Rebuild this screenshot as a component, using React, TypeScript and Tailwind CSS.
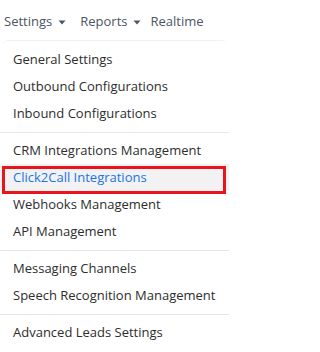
import React from "react";

const Caret = () => (
  <svg width="8" height="5" viewBox="0 0 8 5" className="ml-[6px] mt-[1px]">
    <path d="M0.5 0.5 L7.5 0.5 L4 4.5 Z" fill="#4b5563" />
  </svg>
);

const Item = ({ children }: { children: React.ReactNode }) => (
  <div className="h-[27px] flex items-center pl-[13px] text-[13px] text-[#2d2d2d] whitespace-nowrap">
    {children}
  </div>
);

const Divider = () => <div className="h-px bg-[#e6e6e6] mt-[5px] mb-[4px]" />;

export default function App() {
  return (
    <div className="w-[229px] h-[352px] bg-white overflow-hidden" style={{ fontFamily: "'Open Sans', 'Liberation Sans', sans-serif" }}>
      <div className="h-[40px] flex items-center pl-[4px] pt-[3px] text-[13px] text-[#4b5563]">
        <span className="flex items-center">Settings<Caret /></span>
        <span className="flex items-center ml-[14px]">Reports<Caret /></span>
        <span className="ml-[9px]">Realtime</span>
      </div>
      <div className="rounded-t-[6px] border-t border-[#f2f2f2] pt-[5px] mx-[2px]">
        <div className="-mx-[2px]">
          <Item>General Settings</Item>
          <Item>Outbound Configurations</Item>
          <Item>Inbound Configurations</Item>
          <Divider />
          <Item>CRM Integrations Management</Item>
          <div className="relative h-[27px] flex items-center pl-[13px] text-[13px] text-[#1a73e8] bg-[#f2f2f2] whitespace-nowrap">
            Click2Call Integrations
            <span className="absolute left-[2px] right-[3px] top-[2px] bottom-[-3px] border-[3px] border-[#e8151f]" />
          </div>
          <Item>Webhooks Management</Item>
          <Item>API Management</Item>
          <Divider />
          <Item>Messaging Channels</Item>
          <Item>Speech Recognition Management</Item>
          <Divider />
          <Item>Advanced Leads Settings</Item>
        </div>
      </div>
    </div>
  );
}
